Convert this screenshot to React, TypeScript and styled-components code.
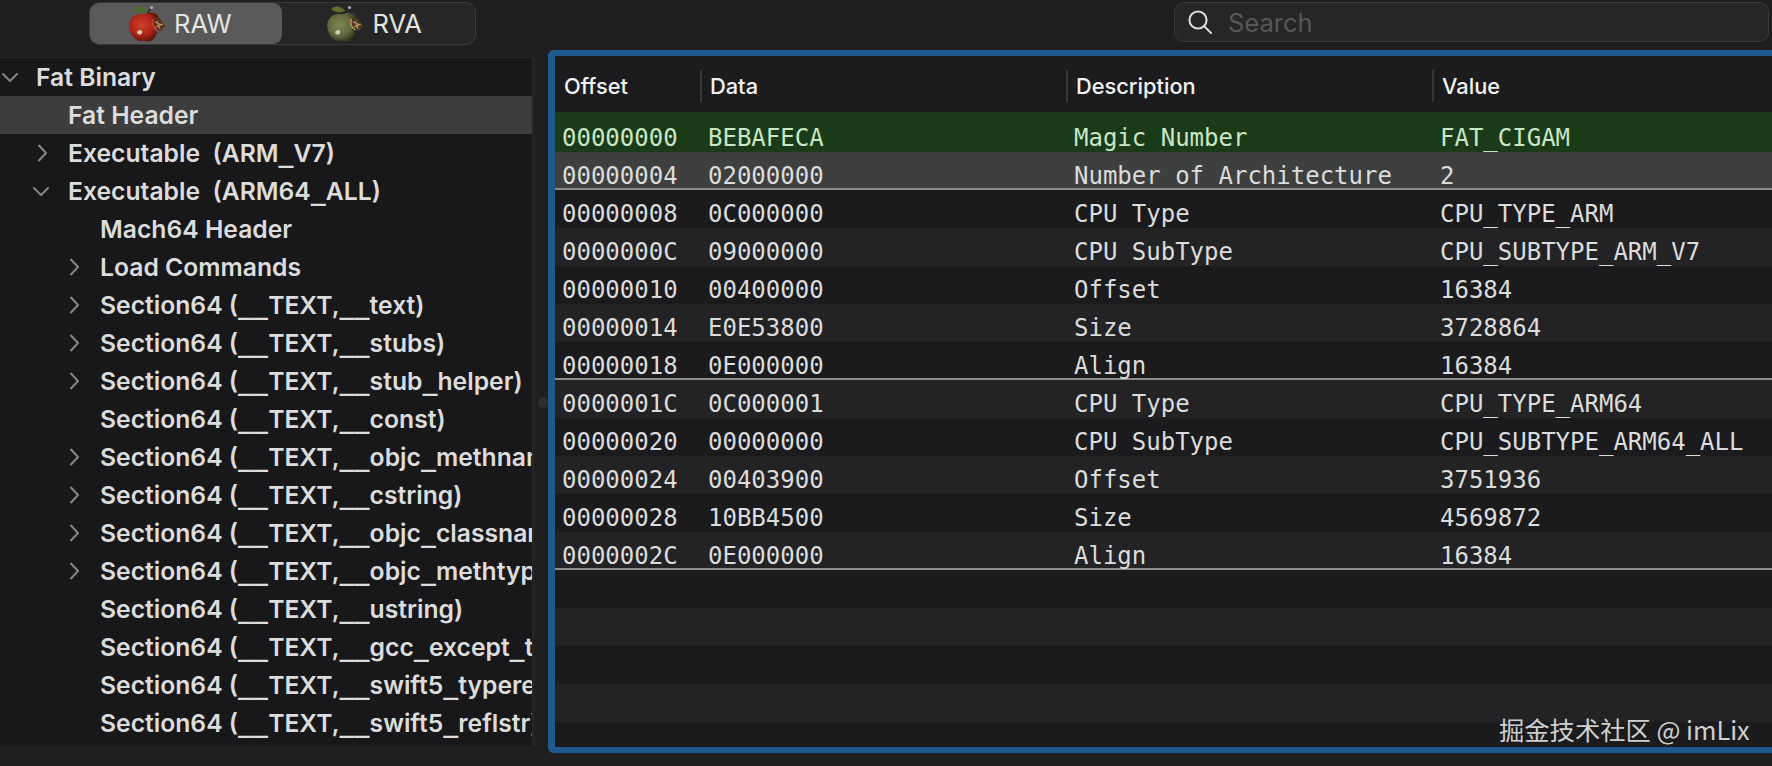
import React from 'react';
import styled, { createGlobalStyle } from 'styled-components';

const Global = createGlobalStyle`
  html, body { margin: 0; padding: 0; background: #1f1f1f; overflow: hidden; }
  #root { width: 1772px; height: 766px; overflow: hidden; }
`;

const Page = styled.div`
  width: 1772px;
  height: 766px;
  position: relative;
  overflow: hidden;
  background: #1f1f1f;
  display: flex;
  flex-direction: column;
  font-family: Inter, "Liberation Sans", sans-serif;
`;

const Toolbar = styled.div`
  height: 50px;
  flex: none;
  display: flex;
  align-items: flex-start;
  padding: 2px 3px 0 89px;
  box-sizing: border-box;
  justify-content: space-between;
`;

const Segmented = styled.div`
  width: 387px;
  height: 43px;
  box-sizing: border-box;
  display: flex;
  background: #262626;
  border: 1px solid #3a3a3a;
  border-radius: 10px;
`;

const Segment = styled.div<{ $active?: boolean }>`
  width: 193px;
  height: 41px;
  box-sizing: border-box;
  display: flex;
  align-items: center;
  gap: 9px;
  padding-left: ${p => (p.$active ? 39 : 45)}px;
  background: ${p => (p.$active ? '#595959' : 'transparent')};
  border-radius: 9px;
  color: #e4e4e4;
  font-size: 25.5px;
  font-weight: 400;
`;

const SearchBox = styled.div`
  width: 595px;
  height: 40px;
  box-sizing: border-box;
  background: #262626;
  border: 1px solid #3a3a3a;
  border-radius: 10px;
  display: flex;
  align-items: center;
  padding-left: 13px;
  gap: 16px;
  color: #575757;
  font-size: 25.5px;
`;

const Content = styled.div`
  flex: none;
  height: 703px;
  display: flex;
  align-items: flex-start;
`;

const Sidebar = styled.div`
  margin-top: 7px;
  width: 534px;
  height: 689px;
  flex: none;
  box-sizing: border-box;
  background: #18181a;
  border-right: 2px solid #262626;
  border-top: 1px solid #262626;
  overflow: hidden;
`;

const TreeRow = styled.div<{ $level: number; $selected?: boolean }>`
  height: 38px;
  display: flex;
  align-items: center;
  box-sizing: border-box;
  padding-left: ${p => p.$level * 32 + 36}px;
  position: relative;
  background: ${p => (p.$selected ? '#3d3d3d' : 'transparent')};
  color: #dcdcdc;
  font-size: 24.7px;
  font-weight: 600;
  white-space: pre;
  overflow: hidden;
`;

const Underscore = styled.span`
  font-family: "DejaVu Sans Mono", monospace;
  font-weight: 700;
  font-size: 25px;
`;

const Chevron = styled.svg<{ $level: number; $closed?: boolean }>`
  position: absolute;
  left: ${p => (p.$level ? p.$level * 32 : 1) + (p.$closed ? 2 : 0)}px;
  top: 9px;
  width: 18px;
  height: 20px;
  fill: none;
  stroke: #848484;
  stroke-width: 2;
  stroke-linecap: round;
  stroke-linejoin: round;
`;

const Gutter = styled.div`
  width: 14px;
  height: 689px;
  margin-top: 7px;
  flex: none;
  display: flex;
  align-items: center;
  justify-content: center;
`;

const Handle = styled.div`
  width: 11px;
  height: 11px;
  border-radius: 50%;
  background: #2e2e2e;
  margin-left: 4px;
  margin-top: 1px;
`;

const TablePanel = styled.div`
  flex: 1;
  height: 703px;
  box-sizing: border-box;
  border: 6px solid #1f5a8e;
  border-right: none;
  border-left-width: 7px;
  border-top-left-radius: 6px;
  border-bottom-left-radius: 6px;
  background: #1b1b1d;
  overflow: hidden;
  display: flex;
  flex-direction: column;
`;

const Header = styled.div`
  height: 56px;
  flex: none;
  display: grid;
  grid-template-columns: 147px 366px 366px 1fr;
  align-items: center;
  padding-top: 3px;
  box-sizing: border-box;
  background: #1c1c1e;
`;

const HeaderCell = styled.div`
  height: 32px;
  line-height: 32px;
  padding-left: 8px;
  box-sizing: border-box;
  border-right: 2px solid #38383a;
  color: #f2f2f2;
  font-size: 21.8px;
  font-weight: 500;
  white-space: pre;
  &:first-child { padding-left: 9px; }
  &:last-child { border-right: none; }
`;

const Row = styled.div<{ $kind: 'green' | 'gray' | 'odd' | 'even'; $line?: boolean }>`
  height: ${p => (p.$kind === 'green' ? 40 : 38)}px;
  padding-top: ${p => (p.$kind === 'green' ? 2 : 0)}px;
  flex: none;
  box-sizing: border-box;
  display: grid;
  grid-template-columns: 146px 366px 366px 1fr;
  align-items: start;
  font-family: "DejaVu Sans Mono", monospace;
  font-size: 24px;
  color: ${p => (p.$kind === 'green' ? '#c9e6c5' : '#dcdcdc')};
  background: ${p =>
    p.$kind === 'green' ? '#1b3a18' : p.$kind === 'gray' ? '#3e3f3f' : p.$kind === 'odd' ? '#232325' : '#1b1b1d'};
  border-bottom: ${p => (p.$line ? '2px solid #8b8b8b' : 'none')};
`;

const Cell = styled.div`
  padding: 10px 0 0 7px;
  white-space: pre;
  line-height: 28px;
  height: 38px;
  box-sizing: border-box;
`;

const Watermark = styled.div`
  position: absolute;
  left: 1499px;
  top: 711px;
  color: #cfcfcf;
  font-family: "Noto Sans CJK SC", sans-serif;
  font-size: 25.3px;
  line-height: 36px;
  white-space: pre;
`;

type AppleProps = { id: string; body: string; dark: string; mid: string; leaf: string; mouth: string; rim: string };

const Apple = ({ id, body, dark, mid, leaf, mouth, rim }: AppleProps) => (
  <svg width="36" height="37" viewBox="0 0 36 37" style={{ flex: 'none' }}>
    <defs>
      <radialGradient id={id} cx="0.42" cy="0.42" r="0.62">
        <stop offset="0" stopColor={body} />
        <stop offset="0.62" stopColor={mid} />
        <stop offset="1" stopColor={dark} />
      </radialGradient>
    </defs>
    <path d="M4 4 C8 0 15 1 18 6 C13 8 8 8 4 4Z" fill={leaf} />
    <path d="M18 9 L22 3" stroke="#2a2a2a" strokeWidth="1.4" />
    <circle cx="22.5" cy="2.5" r="1.6" fill="#a5a9b8" />
    <path d="M15 9.5 C21 6.5 27 7.5 30 12 C26.5 12 24 15 24 19 C24 23 26 26 28 27 C27 32 23.5 36.5 19.5 36.5 C17 36.5 16 35.5 13 36 C7 36.5 0.5 30 0.2 21 C0 13 7 7 15 9.5Z" fill={`url(#${id})`} />
    <path d="M24 14 C27 11 31 13 32 15 L36 21 L32 26 L28 25 C24 22 23 18 24 14Z" fill={mouth} />
    <path d="M24.5 14 C23 18 24 22 28 25" fill="none" stroke={rim} strokeWidth="1.3" />
    <path d="M26 17 L33 20 M27 22 L34 19 M28 16 L31 24" stroke="#b98e66" strokeWidth="1.2" />
    <path d="M8 27 C9 25 12 24 13 26 C14 28 12 30 10 29.5 C9 29.5 8 28 8 27Z" fill="#d9cdb0" />
  </svg>
);

const Search = () => (
  <svg width="24" height="24" viewBox="0 0 24 24" fill="none" stroke="#dedede" strokeWidth="2" strokeLinecap="round" style={{ flex: 'none' }}>
    <circle cx="10" cy="10" r="8.6" />
    <path d="M16.4 16.4 L23 23" />
  </svg>
);

type TreeNode = { t: string; l: number; c?: 'open' | 'closed'; s?: boolean };
const tree: TreeNode[] = [
  { t: 'Fat Binary', l: 0, c: 'open' },
  { t: 'Fat Header', l: 1, s: true },
  { t: 'Executable  (ARM_V7)', l: 1, c: 'closed' },
  { t: 'Executable  (ARM64_ALL)', l: 1, c: 'open' },
  { t: 'Mach64 Header', l: 2 },
  { t: 'Load Commands', l: 2, c: 'closed' },
  { t: 'Section64 (__TEXT,__text)', l: 2, c: 'closed' },
  { t: 'Section64 (__TEXT,__stubs)', l: 2, c: 'closed' },
  { t: 'Section64 (__TEXT,__stub_helper)', l: 2, c: 'closed' },
  { t: 'Section64 (__TEXT,__const)', l: 2 },
  { t: 'Section64 (__TEXT,__objc_methname)', l: 2, c: 'closed' },
  { t: 'Section64 (__TEXT,__cstring)', l: 2, c: 'closed' },
  { t: 'Section64 (__TEXT,__objc_classname)', l: 2, c: 'closed' },
  { t: 'Section64 (__TEXT,__objc_methtype)', l: 2, c: 'closed' },
  { t: 'Section64 (__TEXT,__ustring)', l: 2 },
  { t: 'Section64 (__TEXT,__gcc_except_tab)', l: 2 },
  { t: 'Section64 (__TEXT,__swift5_typeref)', l: 2 },
  { t: 'Section64 (__TEXT,__swift5_reflstr)', l: 2 },
];

const rows: [string, string, string, string][] = [
  ['00000000', 'BEBAFECA', 'Magic Number', 'FAT_CIGAM'],
  ['00000004', '02000000', 'Number of Architecture', '2'],
  ['00000008', '0C000000', 'CPU Type', 'CPU_TYPE_ARM'],
  ['0000000C', '09000000', 'CPU SubType', 'CPU_SUBTYPE_ARM_V7'],
  ['00000010', '00400000', 'Offset', '16384'],
  ['00000014', 'E0E53800', 'Size', '3728864'],
  ['00000018', '0E000000', 'Align', '16384'],
  ['0000001C', '0C000001', 'CPU Type', 'CPU_TYPE_ARM64'],
  ['00000020', '00000000', 'CPU SubType', 'CPU_SUBTYPE_ARM64_ALL'],
  ['00000024', '00403900', 'Offset', '3751936'],
  ['00000028', '10BB4500', 'Size', '4569872'],
  ['0000002C', '0E000000', 'Align', '16384'],
  ['', '', '', ''],
  ['', '', '', ''],
  ['', '', '', ''],
  ['', '', '', ''],
  ['', '', '', ''],
];

const lines = new Set([1, 6, 11]);

const label = (t: string) =>
  t.split(/(_+)/).map((part, i) => (part.startsWith('_') ? <Underscore key={i}>{part}</Underscore> : part));

export default function App() {
  return (
    <Page>
      <Global />
      <Toolbar>
        <Segmented>
          <Segment $active>
            <Apple id="a1" body="#d2402a" mid="#ab2418" dark="#5a0f0a" leaf="#4c6a2c" mouth="#5a2f1c" rim="#e0452f" />
            RAW
          </Segment>
          <Segment>
            <Apple id="a2" body="#7f8655" mid="#60673e" dark="#30341c" leaf="#5f6e2c" mouth="#4a3820" rim="#c8a060" />
            RVA
          </Segment>
        </Segmented>
        <SearchBox>
          <Search />
          Search
        </SearchBox>
      </Toolbar>
      <Content>
        <Sidebar>
          {tree.map(n => (
            <TreeRow key={n.t} $level={n.l} $selected={n.s}>
              {n.c === 'open' && (
                <Chevron $level={n.l} viewBox="0 0 18 20">
                  <path d="M2 7 L9 14 L16 7" />
                </Chevron>
              )}
              {n.c === 'closed' && (
                <Chevron $level={n.l} $closed viewBox="0 0 18 20">
                  <path d="M5 2.5 L12 10 L5 17.5" />
                </Chevron>
              )}
              <span>{label(n.t)}</span>
            </TreeRow>
          ))}
        </Sidebar>
        <Gutter>
          <Handle />
        </Gutter>
        <TablePanel>
          <Header>
            <HeaderCell>Offset</HeaderCell>
            <HeaderCell>Data</HeaderCell>
            <HeaderCell>Description</HeaderCell>
            <HeaderCell>Value</HeaderCell>
          </Header>
          {rows.map((r, i) => (
            <Row
              key={i}
              $kind={i === 0 ? 'green' : i === 1 ? 'gray' : i % 2 === 0 ? 'even' : 'odd'}
              $line={lines.has(i)}
            >
              {r.map((c, j) => (
                <Cell key={j}>{c}</Cell>
              ))}
            </Row>
          ))}
        </TablePanel>
      </Content>
      <Watermark>掘金技术社区 @ imLix</Watermark>
    </Page>
  );
}
